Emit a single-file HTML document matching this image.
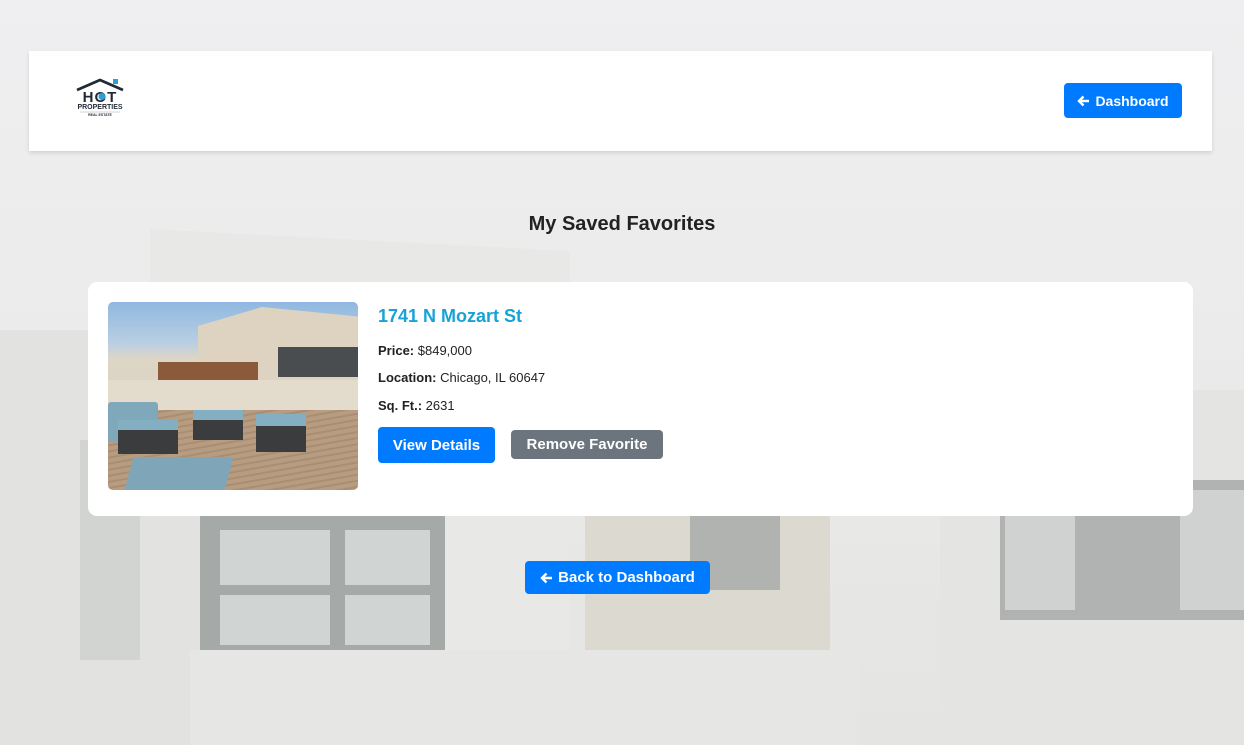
<!DOCTYPE html>
<html><head><meta charset="utf-8"><style>
*{box-sizing:border-box;margin:0;padding:0}
body{width:1244px;height:745px;overflow:hidden;font-family:"Liberation Sans",sans-serif;background:#eeeef0;position:relative}
.bg{position:absolute;inset:0;overflow:hidden}
.b{position:absolute}
.hdr{position:absolute;left:29px;top:51px;width:1183px;height:100px;background:#fff;box-shadow:0 2px 4px rgba(0,0,0,.12)}
.btn{position:absolute;background:#007bff;color:#fff;font-weight:bold;font-size:14px;border-radius:4px;display:flex;align-items:center;justify-content:center;gap:5px}
h2{position:absolute;left:0;width:1244px;top:213px;text-align:center;font-size:20px;color:#222}
.card{position:absolute;left:88px;top:282px;width:1105px;height:234px;background:#fff;border-radius:9px}
.img{position:absolute;left:20px;top:20px;width:250px;height:188px;border-radius:5px;overflow:hidden;background:linear-gradient(#8fb8e0 0,#b9cfe3 22%,#ddd6c6 30%,#d9d2c2 60%,#b79c82 62%,#a88d73 100%)}
.t{position:absolute;left:290px;font-size:13px;color:#222}
</style></head><body>
<div class="bg">
<div class="b" style="left:0;top:0;width:1244px;height:745px;background:linear-gradient(180deg,#efeff1 0%,#ebebeb 45%,#e4e4e2 100%)"></div>
<div class="b" style="left:150px;top:240px;width:420px;height:505px;background:#e8e8e6;transform:skewY(3deg)"></div>
<div class="b" style="left:0;top:330px;width:200px;height:415px;background:#e2e2e0"></div>
<div class="b" style="left:200px;top:515px;width:245px;height:140px;background:#a5a9a7"></div>
<div class="b" style="left:220px;top:530px;width:110px;height:55px;background:#d0d4d2"></div>
<div class="b" style="left:345px;top:530px;width:85px;height:55px;background:#d0d4d2"></div>
<div class="b" style="left:220px;top:595px;width:110px;height:50px;background:#d0d4d2"></div>
<div class="b" style="left:345px;top:595px;width:85px;height:50px;background:#d0d4d2"></div>
<div class="b" style="left:585px;top:515px;width:245px;height:135px;background:#dcd9d0"></div>
<div class="b" style="left:690px;top:515px;width:90px;height:75px;background:#b0b3b0"></div>
<div class="b" style="left:190px;top:650px;width:670px;height:95px;background:#e6e6e4"></div>
<div class="b" style="left:940px;top:390px;width:304px;height:355px;background:#e4e4e2"></div>
<div class="b" style="left:1000px;top:480px;width:244px;height:140px;background:#b0b3b1"></div>
<div class="b" style="left:1005px;top:490px;width:70px;height:120px;background:#cfd2d0"></div>
<div class="b" style="left:1180px;top:490px;width:64px;height:120px;background:#cfd2d0"></div>
<div class="b" style="left:80px;top:440px;width:60px;height:220px;background:#d2d4d2"></div>
</div>
<div class="hdr">
<svg style="position:absolute;left:45px;top:26px" width="52" height="42" viewBox="0 0 52 42">
<path d="M3 13 L26 3 L49 13" fill="none" stroke="#1f2a36" stroke-width="2.8"/>
<rect x="39" y="2" width="5" height="5" fill="#2a9fd8"/>
<text x="26" y="25" text-anchor="middle" font-family="Liberation Sans" font-weight="bold" font-size="15" fill="#1f2a36" letter-spacing="1">HOT</text>
<circle cx="28" cy="19.5" r="3.5" fill="#2a9fd8"/>
<text x="26" y="32" text-anchor="middle" font-family="Liberation Sans" font-weight="bold" font-size="7" fill="#1f2a36">PROPERTIES</text>
<line x1="6" y1="35" x2="46" y2="35" stroke="#aaa" stroke-width=".5"/>
<text x="26" y="39" text-anchor="middle" font-family="Liberation Sans" font-weight="bold" font-size="3.5" fill="#1f2a36">REAL ESTATE</text>
</svg>
<div class="btn" style="left:1035px;top:32px;width:118px;height:35px"><svg width="13" height="12" viewBox="0 0 13 12"><path d="M12 6H2M6.5 1.5L2 6l4.5 4.5" fill="none" stroke="#fff" stroke-width="2.4"/></svg>Dashboard</div>
</div>
<h2>My Saved Favorites</h2>
<div class="card">
<div class="img">
<div class="b" style="left:90px;top:5px;width:160px;height:95px;background:#ddd3c0;clip-path:polygon(0 20%,40% 0,100% 10%,100% 100%,0 100%)"></div>
<div class="b" style="left:170px;top:45px;width:80px;height:30px;background:#4a4d50"></div>
<div class="b" style="left:50px;top:60px;width:100px;height:18px;background:#8a5a3a"></div>
<div class="b" style="left:0;top:78px;width:250px;height:30px;background:#e3dccd"></div>
<div class="b" style="left:0;top:108px;width:250px;height:80px;background:repeating-linear-gradient(170deg,#b89c80 0 4px,#a88e74 4px 6px)"></div>
<div class="b" style="left:0;top:100px;width:50px;height:40px;background:#7fa8bb;border-radius:3px"></div>
<div class="b" style="left:10px;top:118px;width:60px;height:34px;background:#3b3c3e;border-top:10px solid #84aec2"></div>
<div class="b" style="left:85px;top:108px;width:50px;height:30px;background:#3b3c3e;border-top:10px solid #84aec2"></div>
<div class="b" style="left:148px;top:112px;width:50px;height:38px;background:#3b3c3e;border-top:12px solid #84aec2"></div>
<div class="b" style="left:20px;top:155px;width:100px;height:40px;background:#7fa5b8;transform:skewX(-15deg)"></div>
</div>
<div class="t" style="top:24px;font-size:18px;font-weight:bold;color:#17a2d8">1741 N Mozart St</div>
<div class="t" style="top:61px"><b>Price:</b> $849,000</div>
<div class="t" style="top:88px"><b>Location:</b> Chicago, IL 60647</div>
<div class="t" style="top:116px"><b>Sq. Ft.:</b> 2631</div>
<div class="btn" style="left:290px;top:145px;width:117px;height:36px;font-size:15px">View Details</div>
<div class="btn" style="left:423px;top:148px;width:152px;height:29px;font-size:15px;background:#6c757d">Remove Favorite</div>
</div>
<div class="btn" style="left:525px;top:561px;width:185px;height:33px;font-size:15px"><svg width="13" height="12" viewBox="0 0 13 12"><path d="M12 6H2M6.5 1.5L2 6l4.5 4.5" fill="none" stroke="#fff" stroke-width="2.4"/></svg>Back to Dashboard</div>
</body></html>
